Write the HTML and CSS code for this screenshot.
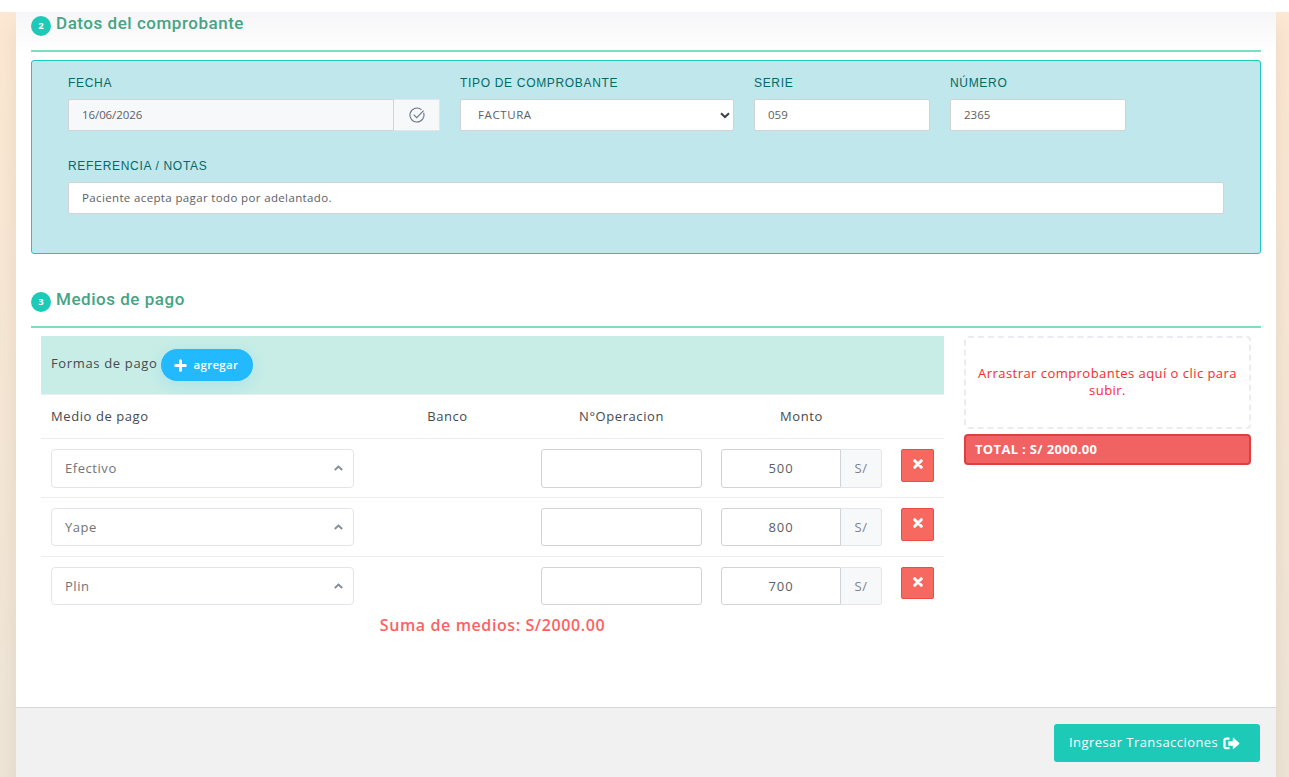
FILE: index.html
```html
<!DOCTYPE html>
<html lang="es">
<head>
<meta charset="utf-8">
<title>Registro de pago</title>
<link rel="stylesheet" href="styles.css">
</head>
<body>
<div class="page">
<main class="panel">
  <section class="section">
    <h2 class="heading"><span class="badge">2</span><span class="heading-text">Datos del comprobante</span></h2>
    <div class="voucher">
      <div class="fields">
        <div class="field"><label>FECHA</label>
          <div class="group"><div class="control readonly date">16/06/2026</div><div class="addon check">
            <svg width="16" height="16" viewBox="0 0 16 16" fill="none" stroke="#6a7486" stroke-width="1.1"><path d="M14.6 5.800A7 7 0 1 1 12.500 2.700M4.700 7.600l3 3 6.900-7"/></svg>
          </div></div>
        </div>
        <div class="field"><label>TIPO DE COMPROBANTE</label>
          <div class="control select"><span>FACTURA</span><svg width="10" height="7" viewBox="0 0 10 7" fill="none" stroke="#3c4148" stroke-width="2"><path d="M1 1.200l4 3.800 4-3.800"/></svg></div>
        </div>
        <div class="field"><label>SERIE</label><div class="control">059</div></div>
        <div class="field"><label>NÚMERO</label><div class="control">2365</div></div>
      </div>
      <div class="field notes"><label>REFERENCIA / NOTAS</label><div class="control note">Paciente acepta pagar todo por adelantado.</div></div>
    </div>
  </section>
  <section class="section second">
    <h2 class="heading"><span class="badge">3</span><span class="heading-text">Medios de pago</span></h2>
    <div class="payment">
      <div class="methods">
        <div class="toolbar"><span>Formas de pago</span><button class="add"><svg width="13" height="13" viewBox="0 0 13 13" stroke="#fff" stroke-width="3" stroke-linecap="round"><path d="M6.500 1.700v9.600M1.700 6.500h9.600"/></svg><span>agregar</span></button></div>
        <div class="row head"><span>Medio de pago</span><span class="center">Banco</span><span class="center">N°Operacion</span><span class="center t-monto">Monto</span></div>
        <div class="row line first">
          <div class="combo"><span>Efectivo</span><svg width="9" height="6" viewBox="0 0 9 6" fill="none" stroke="#858b98" stroke-width="1.800"><path d="M.8 5l3.700-3.500L8.200 5"/></svg></div><i></i><div class="box"></div>
          <div class="group amount"><div class="box value">500</div><div class="addon unit">S/</div></div>
          <button class="remove"><svg width="10" height="10" viewBox="0 0 10 10" stroke="#fff" stroke-width="3" stroke-linecap="round"><path d="M1.700 1.700l6.600 6.600M8.300 1.700l-6.600 6.600"/></svg></button>
        </div>
        <div class="row line">
          <div class="combo"><span>Yape</span><svg width="9" height="6" viewBox="0 0 9 6" fill="none" stroke="#858b98" stroke-width="1.800"><path d="M.8 5l3.700-3.500L8.200 5"/></svg></div><i></i><div class="box"></div>
          <div class="group amount"><div class="box value">800</div><div class="addon unit">S/</div></div>
          <button class="remove"><svg width="10" height="10" viewBox="0 0 10 10" stroke="#fff" stroke-width="3" stroke-linecap="round"><path d="M1.700 1.700l6.600 6.600M8.300 1.700l-6.600 6.600"/></svg></button>
        </div>
        <div class="row line last">
          <div class="combo"><span>Plin</span><svg width="9" height="6" viewBox="0 0 9 6" fill="none" stroke="#858b98" stroke-width="1.800"><path d="M.8 5l3.700-3.500L8.200 5"/></svg></div><i></i><div class="box"></div>
          <div class="group amount"><div class="box value">700</div><div class="addon unit">S/</div></div>
          <button class="remove"><svg width="10" height="10" viewBox="0 0 10 10" stroke="#fff" stroke-width="3" stroke-linecap="round"><path d="M1.700 1.700l6.600 6.600M8.300 1.700l-6.600 6.600"/></svg></button>
        </div>
        <div class="sum">Suma de medios: S/2000.00</div>
      </div>
      <aside class="side">
        <div class="drop">Arrastrar comprobantes aquí o clic para<br>subir.</div>
        <div class="total">TOTAL : S/ 2000.00</div>
      </aside>
    </div>
  </section>
  <footer class="footer"><button class="submit"><span>Ingresar Transacciones</span><svg width="17" height="13" viewBox="0 0 17 13"><path d="M6.500 1.600H3.200Q1.500 1.600 1.500 3.300v6.200q0 1.700 1.700 1.700h3.300" fill="none" stroke="#fff" stroke-width="2.200"/><path d="M5.300 4.200h4.500V1.200q0-1 .8-.4l5.600 5.100q.5.500 0 1l-5.600 5.100q-.8.500-.8-.5V8.700H5.300z" fill="#fff"/></svg></button></footer>
</main>
</div>
</body>
</html>
```
FILE: styles.css
```css
* { box-sizing: border-box; }
body { margin: 0; background: #fff; font-family: "Open Sans", sans-serif; font-size: 13px; color: #464a4f; }
button { border: 0; padding: 0; font: inherit; display: flex; align-items: center; }
svg { flex: none; display: block; }
.page { height: 777px; padding: 12px 13px 0 16px; background: linear-gradient(#fff 12px, transparent 12px), linear-gradient(#fce8d2, #ede5d7); overflow: hidden; }
.panel { height: 765px; display: flex; flex-direction: column; background: linear-gradient(#f6f6f8, #fff 42px); box-shadow: 0 14px 18px rgba(120, 70, 50, .1); }
.section { padding: 0 15px; }
.second { margin-top: 34px; height: 419px; }
.heading { margin: 0 0 8px; height: 40px; border-bottom: 2px solid #7ddfbd; display: flex; align-items: flex-start; gap: 5px; }
.badge { width: 20px; height: 20px; margin-top: 4px; border-radius: 50%; background: #1dc9b7; color: #fff; font: 700 9.500px/19px "Open Sans", sans-serif; text-align: center; }
.heading-text { font: 500 17px/22px Roboto, sans-serif; letter-spacing: .53px; color: #45a484; }
.voucher { height: 194px; border: 1px solid #1dc9b7; border-radius: 3px; background: #c0e7eb; padding: 14px 36px; }
.fields { display: grid; grid-template-columns: 372px 274px 176px 176px; gap: 20px; }
.field label { display: block; height: 24px; font: 400 12px/16px "Liberation Sans", sans-serif; letter-spacing: .68px; color: #006b68; }
.notes { margin-top: 27px; }
.control { height: 32px; background: #fff; border: 1px solid #d1d3d4; border-radius: 2px; padding: 0 13px 2px; display: flex; align-items: center; font-size: 11.500px; color: #5b6066; }
.note { letter-spacing: .36px; }
.group { display: flex; }
.readonly { background: #f7f8fa; }
.date { width: 326px; border-radius: 2px 0 0 2px; letter-spacing: -.08px; }
.addon { background: #f7f8fa; border: 1px solid #e2e5ec; border-left: 0; display: flex; align-items: center; justify-content: center; }
.check { width: 46px; border-radius: 0 2px 2px 0; }
.select { justify-content: space-between; padding: 0 3px 2px 17px; letter-spacing: .6px; }
.select svg { margin-top: 3px; }
.payment { display: flex; gap: 20px; padding: 0 10px; }
.methods { width: 903px; }
.toolbar { height: 58px; background: #c8ede6; padding: 13px 10px; display: flex; gap: 4px; }
.toolbar > span { line-height: 29px; width: 106px; white-space: nowrap; letter-spacing: .65px; }
.add { width: 92px; height: 32px; border-radius: 16px; background: #22b9ff; color: #fff; padding-left: 13px; gap: 6.500px; font-weight: 600; font-size: 11.500px; letter-spacing: .3px; box-shadow: 0 4px 16px rgba(34, 185, 255, .18); }
.add span { margin-top: -1px; }
.row { display: grid; grid-template-columns: 303px 187px 161px 19px 161px 19px 33px; height: 59px; padding: 10px 10px 0; border-top: 1px solid #ebedf2; }
.head { height: 44px; padding-top: 0; line-height: 43px; letter-spacing: .58px; }
.center { text-align: center; }
.t-monto { grid-column: 5; }
.line { letter-spacing: .55px; }
.line .amount { grid-column: 5; }
.line .remove { grid-column: 7; }
.combo { height: 38px; border: 1px solid #e2e5ec; border-radius: 4px; padding: 0 10px 1px 13px; display: flex; align-items: center; justify-content: space-between; color: #717478; }
.box { height: 38px; border: 1px solid #d1d3d4; border-radius: 3px; background: #fff; }
.value { width: 120px; text-align: center; line-height: 36px; letter-spacing: .9px; color: #5b6066; border-radius: 3px 0 0 3px; }
.unit { width: 41px; height: 38px; padding-bottom: 1px; border-radius: 0 3px 3px 0; color: #7d8290; }
.first .combo, .first .box, .first .unit { height: 39px; }
.remove { width: 33px; height: 33px; justify-content: center; align-items: flex-start; padding-top: 9px; border: 1px solid #ea4d42; border-radius: 2px; background: #f66860; }
.last .remove { height: 32px; }
.sum { text-align: center; color: #fd625f; font-weight: 600; font-size: 16px; line-height: 20px; letter-spacing: .6px; }
.side { width: 287px; }
.drop { height: 93px; border: 2px dashed #ebebf2; border-radius: 4px; padding-top: 27px; text-align: center; color: #f8292d; line-height: 17px; letter-spacing: .46px; white-space: nowrap; }
.total { height: 31px; margin-top: 5px; border: 2px solid #dc4041; border-radius: 4px; background: #f16263; color: #fff; padding-left: 9px; font-weight: 700; font-size: 13px; letter-spacing: .33px; line-height: 27px; }
.footer { height: 70px; border-top: 1px solid #d7d7d7; background: #f1f1f1; padding: 16px; display: flex; justify-content: flex-end; }
.submit { width: 206px; height: 38px; border-radius: 3px; background: #1dc9b7; color: #fff; padding-left: 15px; gap: 5px; letter-spacing: .44px; }
.submit span { margin-top: -2px; }
.submit svg { margin-top: 1px; }
```
